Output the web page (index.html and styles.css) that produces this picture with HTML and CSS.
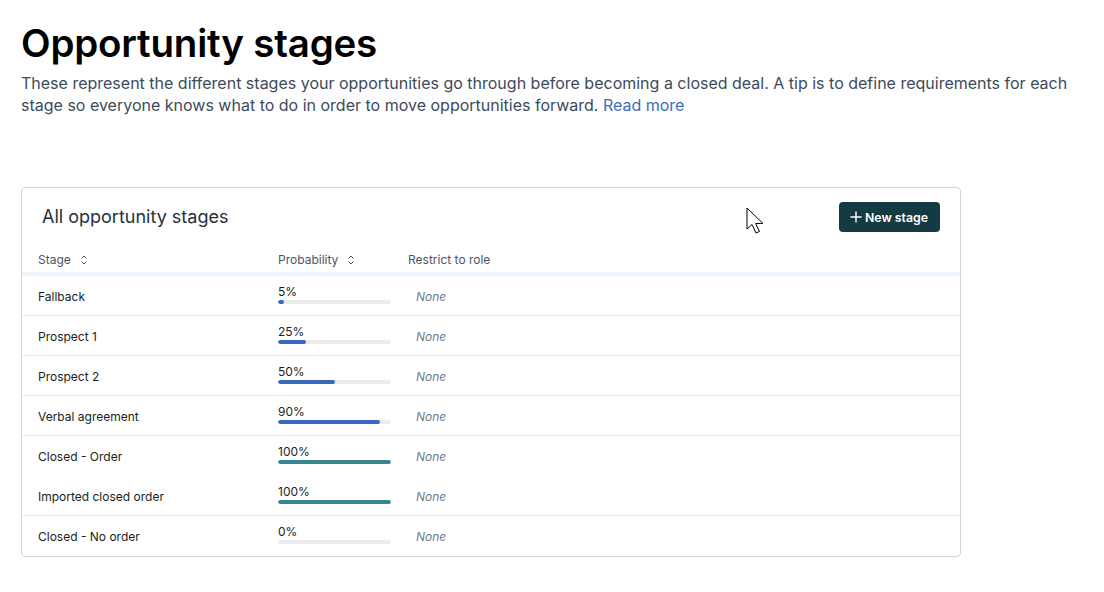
FILE: index.html
```html
<!DOCTYPE html>
<html lang="en">
<head>
<meta charset="utf-8">
<title>Opportunity stages</title>
<link rel="stylesheet" href="styles.css">
</head>
<body>
<main class="page">
  <h1 class="title">Opportunity stages</h1>
  <p class="intro">These represent the different stages your opportunities go through before becoming a closed deal. A tip is to define requirements for each stage so everyone knows what to do in order to move opportunities forward. <a class="link" href="#">Read more</a></p>

  <section class="card">
    <div class="card-head">
      <h2 class="card-title">All opportunity stages</h2>
      <button class="btn"><svg class="plus" viewBox="0 0 12 12" width="12" height="12"><path d="M6 0.5V11.5M0.5 6H11.5" stroke="#fff" stroke-width="1.4" fill="none"/></svg>New stage</button>
    </div>
    <div class="thead">
      <div class="th">Stage <svg class="sort" viewBox="0 0 8 10" width="8" height="10"><path d="M1.5 3.5L4 1L6.5 3.5M1.5 6.5L4 9L6.5 6.5" stroke="#4b5563" stroke-width="1" fill="none"/></svg></div>
      <div class="th">Probability <svg class="sort" viewBox="0 0 8 10" width="8" height="10"><path d="M1.5 3.5L4 1L6.5 3.5M1.5 6.5L4 9L6.5 6.5" stroke="#4b5563" stroke-width="1" fill="none"/></svg></div>
      <div class="th">Restrict to role</div>
    </div>
    <div class="row">
      <div class="stage">Fallback</div>
      <div class="prob"><span class="pct">5%</span><div class="bar"><div class="fill" style="width:5%"></div></div></div>
      <div class="role">None</div>
    </div>
    <div class="row">
      <div class="stage">Prospect 1</div>
      <div class="prob"><span class="pct">25%</span><div class="bar"><div class="fill" style="width:25%"></div></div></div>
      <div class="role">None</div>
    </div>
    <div class="row">
      <div class="stage">Prospect 2</div>
      <div class="prob"><span class="pct">50%</span><div class="bar"><div class="fill" style="width:50%"></div></div></div>
      <div class="role">None</div>
    </div>
    <div class="row">
      <div class="stage">Verbal agreement</div>
      <div class="prob"><span class="pct">90%</span><div class="bar"><div class="fill" style="width:90%"></div></div></div>
      <div class="role">None</div>
    </div>
    <div class="row no-line">
      <div class="stage">Closed - Order</div>
      <div class="prob"><span class="pct">100%</span><div class="bar"><div class="fill won" style="width:100%"></div></div></div>
      <div class="role">None</div>
    </div>
    <div class="row">
      <div class="stage">Imported closed order</div>
      <div class="prob"><span class="pct">100%</span><div class="bar"><div class="fill won" style="width:100%"></div></div></div>
      <div class="role">None</div>
    </div>
    <div class="row last">
      <div class="stage">Closed - No order</div>
      <div class="prob"><span class="pct">0%</span><div class="bar"><div class="fill" style="width:0%"></div></div></div>
      <div class="role">None</div>
    </div>
  </section>
</main>
<svg class="cursor" viewBox="0 0 19 27" width="19" height="27"><path d="M1 1L1 22L6 17.5L10 26L13.5 24.5L9.6 16.5L17 16.5Z" fill="#fff" stroke="#000" stroke-width="1" stroke-linejoin="miter"/></svg>
</body>
</html>
```

FILE: styles.css
```css
* { box-sizing: border-box; }
html, body { margin: 0; padding: 0; background: #fff; }
body {
  font-family: Inter, "Noto Sans", "Liberation Sans", sans-serif;
  color: #1f2329;
  position: relative;
}
.page { padding: 20px 0 0 21px; width: 1080px; }
.title {
  margin: 0;
  font-size: 38.5px;
  line-height: 46px;
  font-weight: 600;
  color: #000;
  letter-spacing: -0.2px;
}
.intro {
  margin: 6px 0 0;
  font-size: 16px;
  line-height: 22px;
  color: #3d4a5a;
  width: 1060px;
}
.link { color: #3c6fb5; text-decoration: none; }

.card {
  margin-top: 71px;
  width: 940px;
  border: 1px solid #cfd8e1;
  border-radius: 4px;
  background: #fff;
}
.card-head {
  display: flex;
  align-items: center;
  justify-content: space-between;
  padding: 14px 20px 0 20px;
  height: 44px;
}
.card-title {
  margin: 0;
  font-size: 18px;
  font-weight: 400;
  color: #27313d;
  margin-top: -1px;
}
.btn {
  display: flex;
  align-items: center;
  gap: 3px;
  height: 30px;
  padding: 0 12px 0 11px;
  border: none;
  border-radius: 4px;
  background: #143a44;
  color: #fff;
  font-family: inherit;
  font-size: 12.3px;
  font-weight: 600;
}
.plus { display: block; }

.thead {
  display: grid;
  grid-template-columns: 240px 130px 1fr;
  padding: 0 16px;
  margin-top: 16px;
  height: 28px;
  align-items: center;
  border-bottom: 4px solid #eef5fc;
}
.th {
  font-size: 12px;
  color: #4b5563;
  display: flex;
  align-items: center;
  gap: 9px;
  margin-top: -1px;
}
.sort { display: block; }

.row {
  display: grid;
  grid-template-columns: 240px 130px 1fr;
  padding: 0 16px;
  height: 40px;
  align-items: center;
  border-bottom: 1px solid #e9e9ea;
}
.row.no-line, .row.last { border-bottom: none; }
.stage { font-size: 12px; color: #1a1d21; margin-top: 1px; }
.prob { display: flex; flex-direction: column; gap: 1px; width: 113px; margin-top: -3px; }
.pct { font-size: 12px; line-height: 14px; color: #1a1d21; }
.bar { height: 4px; border-radius: 2px; background: #ececec; overflow: hidden; }
.fill { height: 100%; border-radius: 2px; background: #3a68bd; min-width: 0; }
.fill.won { background: #3b8590; }
.role { font-size: 12px; font-style: italic; color: #6b7c8d; padding-left: 8px; margin-top: 1px; }

.cursor { position: absolute; left: 746px; top: 207px; }
```
